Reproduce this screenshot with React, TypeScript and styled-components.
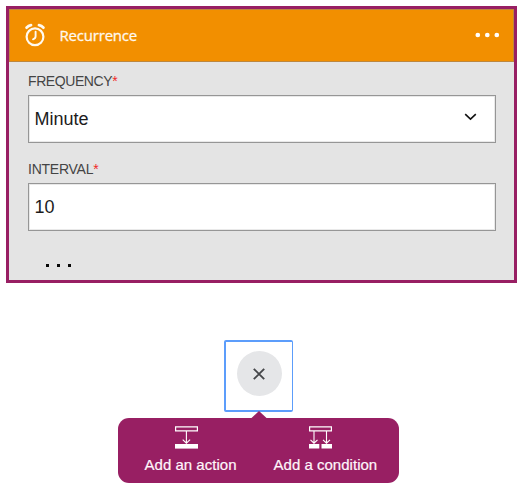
import React from "react";
import styled, { createGlobalStyle } from "styled-components";

const PLUM = "#981f63";

const GlobalStyle = createGlobalStyle`
  *, *::before, *::after { box-sizing: border-box; }
  body {
    margin: 0;
    background: #fff;
    font-family: "Liberation Sans", Arial, sans-serif;
  }
`;

const Page = styled.main`
  width: 523px;
  height: 490px;
  padding: 6px 6px 0 5.5px;
  display: flex;
  flex-direction: column;
  overflow: hidden;
`;

const Card = styled.section`
  width: 511.5px;
  height: 277px;
  flex: none;
  border: 3px solid ${PLUM};
  background: #e4e4e4;
`;

const CardHeader = styled.header`
  height: 53px;
  display: flex;
  align-items: center;
  padding: 0 13px 1px 14px;
  background: #f28f00;
  border: 1px solid #bd873e;
  color: #fff8ee;
`;

const Title = styled.h1`
  flex: 1;
  margin: 0 0 0 14px;
  font: 400 15px/20px "Open Sans", sans-serif;
  letter-spacing: -0.2px;
  -webkit-text-stroke: 0.3px currentColor;
`;

const HeaderMenu = styled.button`
  display: flex;
  border: 0;
  padding: 0;
  background: none;
`;

const Form = styled.div`
  padding: 9px 18.5px 0 19.5px;
`;

const Field = styled.div`
  height: 88px;
`;

const Label = styled.label<{ $tracking: number }>`
  display: block;
  height: 24px;
  font-size: 14px;
  line-height: 20px;
  letter-spacing: ${(p) => p.$tracking}px;
  color: #444;
`;

const Required = styled.span`
  color: #f02828;
`;

const Input = styled.div`
  height: 48px;
  display: flex;
  align-items: center;
  justify-content: space-between;
  padding: 0 18px 0 5.5px;
  background: #fff;
  border: 1px solid #969696;
  box-shadow: inset 0 0 0 1px #e9e9e9;
  font-size: 18px;
  color: #1c1c1c;
`;

const Chevron = styled.svg`
  margin-bottom: 5px;
`;

const MoreOptions = styled.div`
  display: flex;
  gap: 8px;
  padding: 17px 0 0 18px;
`;

const SquareDot = styled.span`
  width: 3px;
  height: 3px;
  background: #080808;
`;

const InsertStep = styled.div`
  width: 281px;
  margin: 57px 0 0 112.5px;
  display: flex;
  flex-direction: column;
  align-items: center;
`;

const FocusFrame = styled.div`
  width: 69px;
  height: 72px;
  display: flex;
  align-items: center;
  justify-content: center;
  padding-bottom: 5px;
  border: solid #5c9dfb;
  border-width: 2px 1px 2px 2px;
  border-radius: 2px;
`;

const CloseButton = styled.button`
  width: 45px;
  height: 45px;
  border: 0;
  border-radius: 50%;
  padding: 0;
  background: #e5e6e8;
  display: grid;
  place-items: center;
`;

const Pointer = styled.svg`
  display: block;
  margin-top: -1px;
`;

const Popup = styled.div`
  width: 281px;
  height: 65px;
  display: flex;
  padding: 8px 0 0 26.5px;
  gap: 37px;
  border-radius: 11px;
  background: ${PLUM};
`;

const Choice = styled.button<{ $width: number; $shift: number }>`
  width: ${(p) => p.$width}px;
  display: flex;
  flex-direction: column;
  align-items: flex-start;
  gap: 6px;
  border: 0;
  padding: 0;
  background: none;
  color: #fff6fb;
  font: 15px/20px "Liberation Sans", Arial, sans-serif;
  letter-spacing: 0.02px;
  -webkit-text-stroke: 0.2px currentColor;
  white-space: nowrap;

  svg {
    margin-left: ${(p) => p.$shift}px;
  }
`;

const AlarmIcon = () => (
  <svg width="22" height="24" viewBox="0 0 22 24" fill="none" stroke="#fffaf0" strokeLinecap="round">
    <circle cx="11" cy="13.8" r="8.4" strokeWidth="2.2" />
    <path d="M11.6 8.8v4.4q0 2.2-2.6 3.1" strokeWidth="1.9" />
    <path d="M2.6 4.7Q4.4 2.5 7 2.1M15 2.1q2.6.4 4.4 2.6" strokeWidth="2.8" />
  </svg>
);

const ActionIcon = () => (
  <svg width="23" height="23" viewBox="0 0 23 23" fill="none" stroke="#fff">
    <path d="M.6.8h21.8v4H.6z" strokeWidth="1.2" />
    <path d="M11.4 5v12M7.7 13.6l3.7 3.6 3.7-3.6" strokeWidth="1.1" />
    <path d="M0 18h23v4.6H0z" fill="#fff" stroke="none" />
  </svg>
);

const ConditionIcon = () => (
  <svg width="23" height="23" viewBox="0 0 23 23" fill="none" stroke="#fff">
    <path d="M.6.8h21.8v4H.6z" strokeWidth="1.2" />
    <path d="M5 5v12M1.5 13.8L5 17.2l3.5-3.4M17.5 5v12M14 13.8l3.5 3.4 3.5-3.4" strokeWidth="1.1" />
    <path d="M0 18h10.3v4.6H0zM12.5 18H23v4.6H12.5z" fill="#fff" stroke="none" />
  </svg>
);

export default function App() {
  return (
    <>
      <GlobalStyle />
      <Page>
        <Card>
          <CardHeader>
            <AlarmIcon />
            <Title>Recurrence</Title>
            <HeaderMenu aria-label="Menu">
              <svg width="25" height="6" viewBox="0 0 25 6" fill="#fff">
                <circle cx="2.8" cy="3" r="2.35" />
                <circle cx="12.3" cy="3" r="2.35" />
                <circle cx="21.8" cy="3" r="2.35" />
              </svg>
            </HeaderMenu>
          </CardHeader>
          <Form>
            <Field>
              <Label $tracking={-0.42}>FREQUENCY<Required>*</Required></Label>
              <Input>
                Minute
                <Chevron width="13" height="8" viewBox="0 0 13 8" fill="none" stroke="#111" strokeWidth="1.6">
                  <path d="M1.2 1.2l5.3 5 5.3-5" />
                </Chevron>
              </Input>
            </Field>
            <Field>
              <Label $tracking={-0.24}>INTERVAL<Required>*</Required></Label>
              <Input>10</Input>
            </Field>
            <MoreOptions>
              <SquareDot />
              <SquareDot />
              <SquareDot />
            </MoreOptions>
          </Form>
        </Card>
        <InsertStep>
          <FocusFrame>
            <CloseButton aria-label="Close">
              <svg width="12" height="12" viewBox="0 0 12 12" stroke="#45474a" strokeWidth="1.9">
                <path d="M.8.8l10.4 10.4M11.2.8L.8 11.2" />
              </svg>
            </CloseButton>
          </FocusFrame>
          <Pointer width="16" height="7" viewBox="0 0 16 7" fill={PLUM}>
            <path d="M8 0l7.5 7H.5z" />
          </Pointer>
          <Popup>
            <Choice $width={92} $shift={30}>
              <ActionIcon />
              Add an action
            </Choice>
            <Choice $width={104} $shift={35}>
              <ConditionIcon />
              Add a condition
            </Choice>
          </Popup>
        </InsertStep>
      </Page>
    </>
  );
}
